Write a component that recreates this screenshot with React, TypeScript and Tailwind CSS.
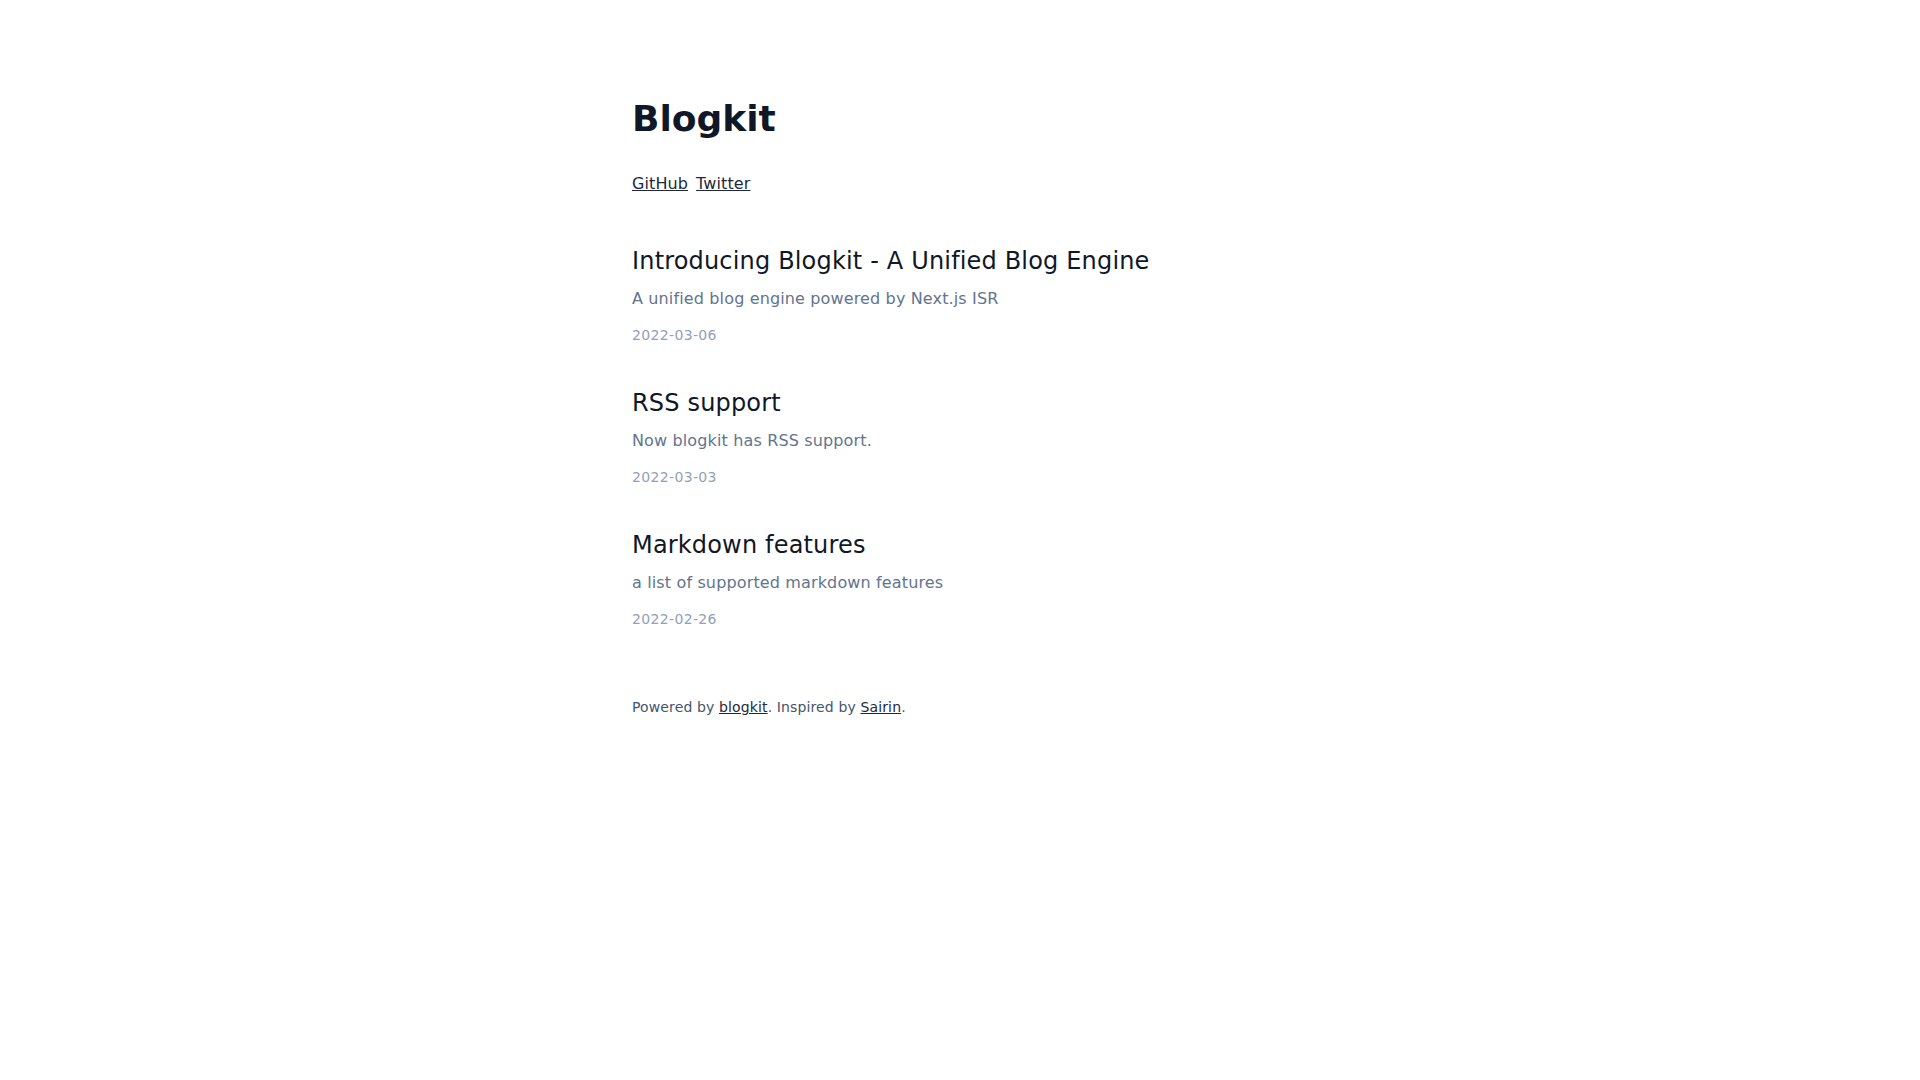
const posts = [
  {
    title: 'Introducing Blogkit - A Unified Blog Engine',
    summary: 'A unified blog engine powered by Next.js ISR',
    date: '2022-03-06',
  },
  {
    title: 'RSS support',
    summary: 'Now blogkit has RSS support.',
    date: '2022-03-03',
  },
  {
    title: 'Markdown features',
    summary: 'a list of supported markdown features',
    date: '2022-02-26',
  },
];

export default function App() {
  return (
    <div className="min-h-screen bg-white font-['DejaVu_Sans',sans-serif]">
      <div className="mx-auto max-w-2xl px-2 pt-[99px] pb-16">
        {/* Header */}
        <header>
          <h1 className="text-4xl font-bold text-gray-900">Blogkit</h1>
          <nav className="mt-[33px] flex gap-2 text-base tracking-[0.1px] text-gray-800">
            <a href="#" className="underline">GitHub</a>
            <a href="#" className="underline">Twitter</a>
          </nav>
        </header>

        {/* Posts */}
        <main className="mt-[49px] flex flex-col gap-[42px]">
          {posts.map((post) => (
            <article key={post.date}>
              <h2 className="text-2xl tracking-[0.17px] text-gray-900">
                <a href="#">{post.title}</a>
              </h2>
              <p className="mt-2.5 text-base tracking-[0.14px] text-slate-500">{post.summary}</p>
              <p className="mt-[14px] text-sm tracking-[0.35px] text-slate-400">{post.date}</p>
            </article>
          ))}
        </main>

        {/* Footer */}
        <footer className="mt-[68px] text-sm tracking-[0.13px] text-slate-600">
          Powered by <a href="#" className="text-gray-800 underline">blogkit</a>. Inspired by{' '}
          <a href="#" className="text-gray-800 underline">Sairin</a>.
        </footer>
      </div>
    </div>
  );
}
